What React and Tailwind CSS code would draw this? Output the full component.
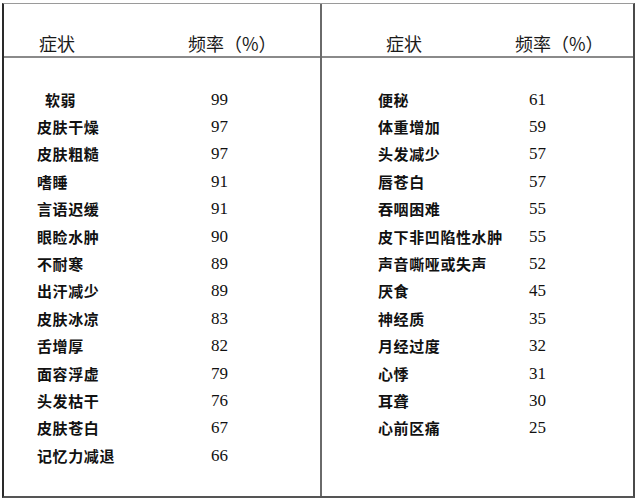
const left = [
  ["软弱", "99", true],
  ["皮肤干燥", "97"],
  ["皮肤粗糙", "97"],
  ["嗜睡", "91"],
  ["言语迟缓", "91"],
  ["眼睑水肿", "90"],
  ["不耐寒", "89"],
  ["出汗减少", "89"],
  ["皮肤冰凉", "83"],
  ["舌增厚", "82"],
  ["面容浮虚", "79"],
  ["头发枯干", "76"],
  ["皮肤苍白", "67"],
  ["记忆力减退", "66"],
];

const right = [
  ["便秘", "61"],
  ["体重增加", "59"],
  ["头发减少", "57"],
  ["唇苍白", "57"],
  ["吞咽困难", "55"],
  ["皮下非凹陷性水肿", "55"],
  ["声音嘶哑或失声", "52"],
  ["厌食", "45"],
  ["神经质", "35"],
  ["月经过度", "32"],
  ["心悸", "31"],
  ["耳聋", "30"],
  ["心前区痛", "25"],
];

const cjk = { fontFamily: '"Noto Sans CJK SC", sans-serif' };
const num = { fontFamily: '"Liberation Serif", "Times New Roman", serif' };

function Column({ rows, headPad, headNameW, rowPad, rowNameW }) {
  return (
    <div className="flex flex-col">
      <div
        className="h-[54px] flex items-end pb-[1px] border-b-2 border-[#8a8a8a] text-[18px] leading-[24px] text-[#1a1a1a]"
        style={{ ...cjk, paddingLeft: headPad }}
      >
        <span className="shrink-0" style={{ width: headNameW }}>症状</span>
        <span>频率（%）</span>
      </div>
      <div className="flex flex-col pt-[28px]" style={{ paddingLeft: rowPad }}>
        {rows.map(([name, val, indent]) => (
          <div key={name} className="h-[27.4px] flex items-center">
            <span
              className={`shrink-0 text-[15px] leading-[20px] font-semibold tracking-[0.6px] text-[#111] ${indent ? "pl-[8px]" : ""}`}
              style={{ ...cjk, width: rowNameW }}
            >
              {name}
            </span>
            <span className="text-[17px] leading-[20px] text-[#111]" style={num}>
              {val}
            </span>
          </div>
        ))}
      </div>
    </div>
  );
}

export default function App() {
  return (
    <div className="w-[637px] h-[500px] bg-white pt-[3px] pl-[2px]">
      <div className="w-[633px] h-[495px] border-l-2 border-l-[#2a2a2a] border-t border-t-[#9a9a9a] border-r-2 border-r-[#4a4a4a] border-b-2 border-b-[#555] grid grid-cols-[316px_2px_1fr]">
        <Column rows={left} headPad={35} headNameW={149} rowPad={33} rowNameW={174} />
        <div className="bg-[#6a6a6a]" />
        <Column rows={right} headPad={64} headNameW={129} rowPad={56} rowNameW={151} />
      </div>
    </div>
  );
}
